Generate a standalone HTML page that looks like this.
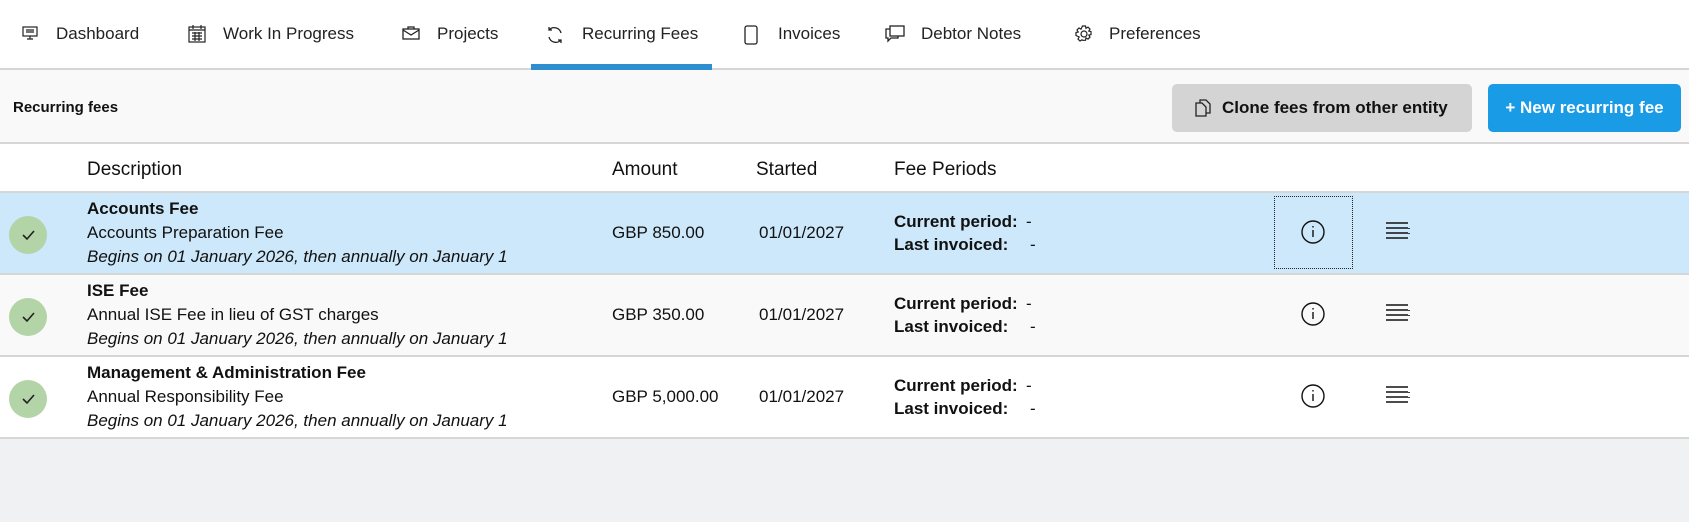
<!DOCTYPE html>
<html><head><meta charset="utf-8"><style>
*{margin:0;padding:0;box-sizing:border-box}
body{width:1689px;height:522px;background:#f0f1f2;font-family:"Liberation Sans",sans-serif;color:#111;position:relative;overflow:hidden}
.nav{position:absolute;left:0;top:0;width:1689px;height:70px;background:#fff;border-bottom:2px solid #d6d6d6}
.nav span{position:absolute;top:24px;font-size:17px;color:#222}
.nav svg{position:absolute;top:25px}
.ul{position:absolute;left:531px;top:64px;width:181px;height:6px;background:#2d8fd0}
.tb{position:absolute;left:0;top:70px;width:1689px;height:74px;background:#f9f9f9;border-bottom:2px solid #d6d6d6}
.tb .t{position:absolute;left:13px;top:29px;font-size:15px;font-weight:bold}
.btn{position:absolute;top:14px;height:48px;border-radius:5px;font-size:17px;font-weight:bold;line-height:48px}
.hd{position:absolute;left:0;top:144px;width:1689px;height:49px;background:#fff;border-bottom:2px solid #d6d6d6;font-size:19px}
.hd span{position:absolute;top:15px}
.row{position:absolute;left:0;width:1689px;height:82px;border-bottom:2px solid #d6d6d6;font-size:17px}
.row span{position:absolute;white-space:nowrap}
.chk{position:absolute;left:9px;top:23px;width:38px;height:38px;border-radius:50%;background:#b3d4a7}
.b{font-weight:bold}
.i{font-style:italic}
</style></head><body>
<div class="nav">
<svg style="left:22px" width="16" height="16" viewBox="0 0 16 16" fill="none" stroke="#222" stroke-width="1.2"><rect x="1" y="2" width="14" height="9"/><path d="M4 5h8M4 7h8M8 11v3M5 14h6"/></svg><span style="left:56px">Dashboard</span>
<svg style="left:188px" width="18" height="18" viewBox="0 0 18 18" fill="none" stroke="#222" stroke-width="1.2"><rect x="1" y="2" width="16" height="15"/><path d="M1 5h16M5 0v4M13 0v4M4 8h10M4 11h10M4 14h10M7 7v9M11 7v9"/></svg><span style="left:223px">Work In Progress</span>
<svg style="left:402px" width="18" height="16" viewBox="0 0 18 16" fill="none" stroke="#222" stroke-width="1.3"><rect x="1" y="4" width="16" height="10"/><path d="M6 4V2h6v2M1 5l8 5 8-5"/></svg><span style="left:437px">Projects</span>
<svg style="left:545px" width="20" height="20" viewBox="0 0 20 20" fill="none" stroke="#222" stroke-width="1.3"><path d="M16 8A7 7 0 0 0 4 5M4 12a7 7 0 0 0 12 3M4 2v3h3M16 18v-3h-3"/></svg><span style="left:582px">Recurring Fees</span>
<svg style="left:744px" width="14" height="20" viewBox="0 0 14 20" fill="none" stroke="#222" stroke-width="1.3"><rect x="1" y="1" width="12" height="18" rx="2"/></svg><span style="left:778px">Invoices</span>
<svg style="left:885px" width="20" height="18" viewBox="0 0 20 18" fill="none" stroke="#222" stroke-width="1.3"><rect x="5" y="1" width="14" height="10"/><path d="M5 4H1v9h2v3l3-3h7v-2"/></svg><span style="left:921px">Debtor Notes</span>
<svg style="left:1075px" width="18" height="18" viewBox="0 0 18 18" fill="none" stroke="#222" stroke-width="1.2"><circle cx="9" cy="9" r="3"/><path d="M7.5 1h3l.5 2.3 2-1.2 2 2-1.2 2 2.2.5v3l-2.2.5 1.2 2-2 2-2-1.2-.5 2.4h-3L7 14.8l-2 1.2-2-2 1.2-2L1 10.5v-3l2.2-.5-1.2-2 2-2 2 1.2z"/></svg><span style="left:1109px">Preferences</span>
<div class="ul"></div>
</div>
<div class="tb"><div class="t">Recurring fees</div>
<div class="btn" style="left:1172px;width:300px;background:#d4d4d4;color:#111"><svg style="position:absolute;left:23px;top:15px" width="16" height="18" viewBox="0 0 16 18" fill="none" stroke="#222" stroke-width="1.3"><path d="M5 4V1h6l4 4v9h-4"/><path d="M1 4h6l4 4v9H1z"/></svg><span style="position:absolute;left:50px">Clone fees from other entity</span></div>
<div class="btn" style="left:1488px;width:193px;background:#1a9be6;color:#fff;text-align:center">+ New recurring fee</div>
</div>
<div class="hd"><span style="left:87px">Description</span><span style="left:612px">Amount</span><span style="left:756px">Started</span><span style="left:894px">Fee Periods</span></div>

<div class="row" style="top:193px;background:#cce8fa">
<div class="chk"><svg width="38" height="38" viewBox="0 0 38 38" fill="none" stroke="#222" stroke-width="1.6"><path d="M14 19l4 4 7-8"/></svg></div>
<span class="b" style="left:87px;top:6px">Accounts Fee</span><span style="left:87px;top:30px">Accounts Preparation Fee</span><span class="i" style="left:87px;top:54px">Begins on 01 January 2026, then annually on January 1</span>
<span style="left:612px;top:30px">GBP 850.00</span><span style="left:759px;top:30px">01/01/2027</span>
<span class="b" style="left:894px;top:19px">Current period:</span><span style="left:1026px;top:19px">-</span><span class="b" style="left:894px;top:42px">Last invoiced:</span><span style="left:1030px;top:42px">-</span>
<div style="position:absolute;left:1274px;top:3px;width:79px;height:73px;border:1.5px dotted #222"></div>
<svg style="position:absolute;left:1300px;top:26px" width="26" height="26" viewBox="0 0 26 26" fill="none" stroke="#111" stroke-width="1.4"><circle cx="13" cy="13" r="11"/><path d="M13 11v7M13 7v1.5"/></svg>
<svg style="position:absolute;left:1386px;top:28px" width="24" height="22" viewBox="0 0 24 22" stroke="#111" stroke-width="1.6"><path d="M0 2h22M0 7h22M0 12h22M0 17h22M23 7v1M23 12v1"/></svg>
</div>

<div class="row" style="top:275px;background:#f9f9f9">
<div class="chk"><svg width="38" height="38" viewBox="0 0 38 38" fill="none" stroke="#222" stroke-width="1.6"><path d="M14 19l4 4 7-8"/></svg></div>
<span class="b" style="left:87px;top:6px">ISE Fee</span><span style="left:87px;top:30px">Annual ISE Fee in lieu of GST charges</span><span class="i" style="left:87px;top:54px">Begins on 01 January 2026, then annually on January 1</span>
<span style="left:612px;top:30px">GBP 350.00</span><span style="left:759px;top:30px">01/01/2027</span>
<span class="b" style="left:894px;top:19px">Current period:</span><span style="left:1026px;top:19px">-</span><span class="b" style="left:894px;top:42px">Last invoiced:</span><span style="left:1030px;top:42px">-</span>
<svg style="position:absolute;left:1300px;top:26px" width="26" height="26" viewBox="0 0 26 26" fill="none" stroke="#111" stroke-width="1.4"><circle cx="13" cy="13" r="11"/><path d="M13 11v7M13 7v1.5"/></svg>
<svg style="position:absolute;left:1386px;top:28px" width="24" height="22" viewBox="0 0 24 22" stroke="#111" stroke-width="1.6"><path d="M0 2h22M0 7h22M0 12h22M0 17h22M23 7v1M23 12v1"/></svg>
</div>

<div class="row" style="top:357px;background:#fff">
<div class="chk"><svg width="38" height="38" viewBox="0 0 38 38" fill="none" stroke="#222" stroke-width="1.6"><path d="M14 19l4 4 7-8"/></svg></div>
<span class="b" style="left:87px;top:6px">Management &amp; Administration Fee</span><span style="left:87px;top:30px">Annual Responsibility Fee</span><span class="i" style="left:87px;top:54px">Begins on 01 January 2026, then annually on January 1</span>
<span style="left:612px;top:30px">GBP 5,000.00</span><span style="left:759px;top:30px">01/01/2027</span>
<span class="b" style="left:894px;top:19px">Current period:</span><span style="left:1026px;top:19px">-</span><span class="b" style="left:894px;top:42px">Last invoiced:</span><span style="left:1030px;top:42px">-</span>
<svg style="position:absolute;left:1300px;top:26px" width="26" height="26" viewBox="0 0 26 26" fill="none" stroke="#111" stroke-width="1.4"><circle cx="13" cy="13" r="11"/><path d="M13 11v7M13 7v1.5"/></svg>
<svg style="position:absolute;left:1386px;top:28px" width="24" height="22" viewBox="0 0 24 22" stroke="#111" stroke-width="1.6"><path d="M0 2h22M0 7h22M0 12h22M0 17h22M23 7v1M23 12v1"/></svg>
</div>
</body></html>
